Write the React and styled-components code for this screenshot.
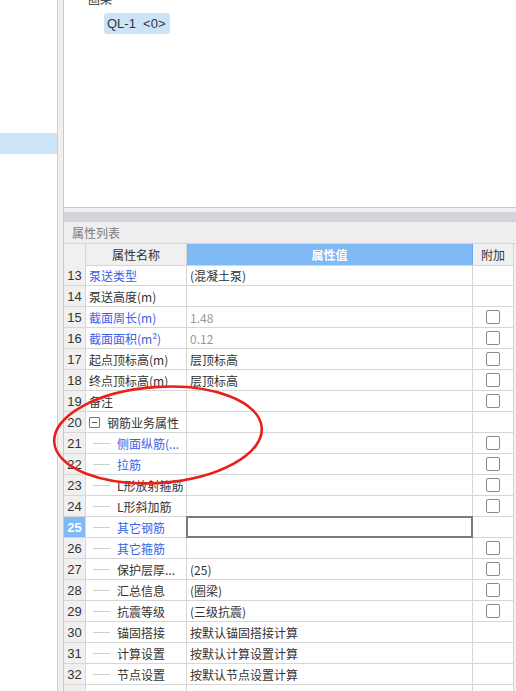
import React from 'react';
import styled, { createGlobalStyle } from 'styled-components';

const GlobalStyle = createGlobalStyle`
  body {
    margin: 0;
    background: #f0f0f0;
    overflow: hidden;
  }
  * {
    box-sizing: border-box;
  }
`;

const cjk = `"Noto Sans CJK SC", "Microsoft YaHei", sans-serif`;
const latin = `"Liberation Sans", "Noto Sans CJK SC", sans-serif`;

const rows = [
  { n: 13, name: '泵送类型', blue: true, value: '(混凝土泵)' },
  { n: 14, name: '泵送高度(m)' },
  { n: 15, name: '截面周长(m)', blue: true, value: '1.48', muted: true, check: true },
  { n: 16, name: '截面面积(m²)', blue: true, value: '0.12', muted: true, check: true },
  { n: 17, name: '起点顶标高(m)', value: '层顶标高', check: true },
  { n: 18, name: '终点顶标高(m)', value: '层顶标高', check: true },
  { n: 19, name: '备注', check: true },
  { n: 20, name: '钢筋业务属性', group: true },
  { n: 21, name: '侧面纵筋(...', blue: true, child: true, check: true },
  { n: 22, name: '拉筋', blue: true, child: true, check: true },
  { n: 23, name: 'L形放射箍筋', child: true, check: true },
  { n: 24, name: 'L形斜加筋', child: true, check: true },
  { n: 25, name: '其它钢筋', blue: true, child: true, editing: true },
  { n: 26, name: '其它箍筋', blue: true, child: true, check: true },
  { n: 27, name: '保护层厚...', child: true, value: '(25)', check: true },
  { n: 28, name: '汇总信息', child: true, value: '(圈梁)', check: true },
  { n: 29, name: '抗震等级', child: true, value: '(三级抗震)', check: true },
  { n: 30, name: '锚固搭接', child: true, value: '按默认锚固搭接计算' },
  { n: 31, name: '计算设置', child: true, value: '按默认计算设置计算' },
  { n: 32, name: '节点设置', child: true, value: '按默认节点设置计算' },
  { n: 33, name: '', child: true, value: '' },
];

const Screen = styled.div`
  position: relative;
  display: flex;
  width: 516px;
  height: 691px;
  overflow: hidden;
  background: #f0f0f0;
  font-family: ${cjk};
  color: #333;
`;

const LeftPanel = styled.div`
  width: 58px;
  flex-shrink: 0;
  background: #fff;
  border-right: 1px solid #cfcfcf;
  padding-top: 133px;
`;

const LeftSelection = styled.div`
  height: 21px;
  background: #cce4f7;
`;

const Main = styled.div`
  flex: 1;
  display: flex;
  flex-direction: column;
  margin-left: 5px;
  border-left: 1px solid #c9c9c9;
  min-width: 0;
`;

const TreePanel = styled.div`
  height: 208px;
  flex-shrink: 0;
  background: #fff;
  border-bottom: 1px solid #c8c8c8;
  overflow: hidden;
`;

const TreeRow = styled.div`
  display: flex;
  align-items: center;
  gap: 4px;
  height: 20px;
  margin-top: -12px;
  padding-left: 13px;
  font-size: 12px;
  color: #333;
`;

const Chip = styled.div`
  display: inline-block;
  margin: 5px 0 0 40px;
  height: 21px;
  padding: 0 4px 0 3px;
  line-height: 21px;
  border-radius: 3px;
  background: #cce4f7;
  font-family: ${latin};
  font-size: 13px;
  white-space: pre;
  color: #333;
`;

const Spacer = styled.div`
  height: 4px;
  flex-shrink: 0;
`;

const Splitter = styled.div`
  height: 10px;
  flex-shrink: 0;
  background: #d4d5da;
`;

const PanelTitle = styled.div`
  height: 22px;
  flex-shrink: 0;
  padding-left: 8px;
  line-height: 21px;
  font-size: 12px;
  color: #7a7a7a;
  background: #eeeeee;
  border-bottom: 1px solid #d4d4d4;
`;

const Grid = styled.div`
  display: grid;
  grid-template-columns: 22px 101px 286px 41px;
  grid-auto-rows: 21px;
  width: 450px;
  background: #fff;
`;

const Cell = styled.div`
  display: flex;
  align-items: center;
  min-width: 0;
  overflow: hidden;
  white-space: nowrap;
  border-right: 1px solid #d6d6d6;
  border-bottom: 1px solid #d6d6d6;
  font-size: 12px;
`;

const HeadCell = styled(Cell)`
  justify-content: center;
  height: 22px;
  background: ${(p) => (p.$accent ? '#7fb9f6' : '#f0f0f0')};
  color: ${(p) => (p.$accent ? '#fff' : '#333')};
  font-weight: ${(p) => (p.$accent ? 'bold' : 'normal')};
  border-right-color: ${(p) => (p.$accent ? '#6aa9ec' : '#d6d6d6')};
`;

const IndexCell = styled(Cell)`
  justify-content: center;
  font-family: ${latin};
  font-size: 13px;
  background: ${(p) => (p.$active ? '#7fb9f6' : '#f0f0f0')};
  color: ${(p) => (p.$active ? '#fff' : '#333')};
  font-weight: ${(p) => (p.$active ? 'bold' : 'normal')};
`;

const NameCell = styled(Cell)`
  padding-left: ${(p) => (p.$child ? '7px' : '3px')};
  color: ${(p) => (p.$blue ? '#3a5fe6' : '#333')};
`;

const TreeLine = styled.span`
  flex-shrink: 0;
  width: 17px;
  height: 1px;
  margin-right: 7px;
  background: #cfcfcf;
`;

const Toggle = styled.span`
  flex-shrink: 0;
  position: relative;
  width: 11px;
  height: 11px;
  margin-right: 7px;
  border: 1px solid #777;
  border-radius: 1px;
  &::after {
    content: '';
    position: absolute;
    left: 2px;
    right: 2px;
    top: 4px;
    height: 1px;
    background: #555;
  }
`;

const ValueCell = styled(Cell)`
  padding-left: 3px;
  color: ${(p) => (p.$muted ? '#999' : '#333')};
  ${(p) => p.$editing && 'border: 2px solid #7a7a7a; margin: -1px 0 0 -1px; height: 22px;'}
`;

const ExtraCell = styled(Cell)`
  justify-content: center;
`;

const CheckBox = styled.span`
  width: 14px;
  height: 14px;
  border: 1px solid #8a8a8a;
  border-radius: 2px;
  background: #fff;
`;

const Annotation = styled.svg`
  position: absolute;
  inset: 0;
  pointer-events: none;
`;

export default function App() {
  return (
    <Screen>
      <GlobalStyle />
      <LeftPanel>
        <LeftSelection />
      </LeftPanel>
      <Main>
        <TreePanel>
          <TreeRow>
            <svg width="7" height="5" viewBox="0 0 7 5">
              <path d="M0.5 0.5 L3.5 4 L6.5 0.5" fill="none" stroke="#666" strokeWidth="1" />
            </svg>
            圈梁
          </TreeRow>
          <Chip>QL-1  &lt;0&gt;</Chip>
        </TreePanel>
        <Spacer />
        <Splitter />
        <PanelTitle>属性列表</PanelTitle>
        <Grid>
          <HeadCell />
          <HeadCell>属性名称</HeadCell>
          <HeadCell $accent>属性值</HeadCell>
          <HeadCell>附加</HeadCell>
          {rows.map((r) => (
            <React.Fragment key={r.n}>
              <IndexCell $active={r.editing}>{r.n < 33 ? r.n : ''}</IndexCell>
              <NameCell $blue={r.blue} $child={r.child}>
                {r.child && <TreeLine />}
                {r.group && <Toggle />}
                {r.name}
              </NameCell>
              <ValueCell $muted={r.muted} $editing={r.editing}>
                {r.value}
              </ValueCell>
              <ExtraCell>{r.check && <CheckBox />}</ExtraCell>
            </React.Fragment>
          ))}
        </Grid>
      </Main>
      <Annotation width="516" height="691" viewBox="0 0 516 691">
        <ellipse
          cx="158"
          cy="435"
          rx="104"
          ry="48"
          transform="rotate(-4 158 435)"
          fill="none"
          stroke="#ea1f1a"
          strokeWidth="2.6"
        />
      </Annotation>
    </Screen>
  );
}
